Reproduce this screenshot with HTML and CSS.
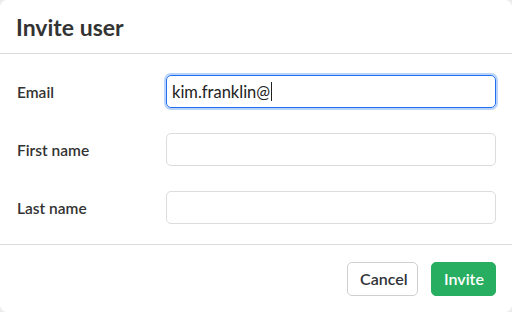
FILE: index.html
```html
<!DOCTYPE html>
<html lang="en">
<head>
    <meta charset="UTF-8">
    <meta name="viewport" content="width=device-width, initial-scale=1.0">
    <title>Invite user</title>
    <link rel="stylesheet" href="styles.css">
</head>
<body>

<div class="dialog">
    <div class="dialog-header">
        <h1>Invite user</h1>
    </div>

    <div class="dialog-body">
        <div class="form-row">
            <label for="email">Email</label>
            <div class="field focused"><span class="value">kim.franklin@</span><span class="caret"></span></div>
        </div>
        <div class="form-row">
            <label for="first-name">First name</label>
            <div class="field"></div>
        </div>
        <div class="form-row">
            <label for="last-name">Last name</label>
            <div class="field"></div>
        </div>
    </div>

    <div class="dialog-footer">
        <button class="btn btn-default">Cancel</button>
        <button class="btn btn-primary">Invite</button>
    </div>
</div>

</body>
</html>
```

FILE: styles.css
```css
html, body {
    margin: 0;
    padding: 0;
    background-color: #ececec;
}
body {
    font-family: Lato, "Noto Sans", sans-serif;
    color: #2f3337;
}
.dialog {
    width: 512px;
    height: 312px;
    background-color: #fff;
    border-radius: 7px;
    display: flex;
    flex-direction: column;
    box-sizing: border-box;
}
.dialog-header {
    height: 53px;
    border-bottom: 1px solid #dcdcdc;
    padding: 0 16px;
    display: flex;
    align-items: center;
}
.dialog-header h1 {
    margin: 0;
    font-size: 23px;
    font-weight: bold;
    color: #333;
}
.dialog-body {
    padding: 21px 16px 20px 17px;
    display: flex;
    flex-direction: column;
    gap: 25px;
    border-bottom: 1px solid #dcdcdc;
}
.form-row {
    display: flex;
    align-items: center;
}
.form-row label {
    width: 149px;
    font-size: 15.5px;
    font-weight: 600;
    color: #333;
}
.field {
    flex: 1;
    height: 33px;
    box-sizing: border-box;
    border: 1px solid #dcdcdc;
    border-radius: 5px;
    display: flex;
    align-items: center;
    padding: 0 5px;
    font-size: 16.5px;
    color: #222;
}
.field.focused {
    border-color: #1f6ff0;
    box-shadow: 0 0 0 2px #b9d3fb;
}
.caret {
    display: inline-block;
    width: 1px;
    height: 19px;
    background-color: #222;
    margin-left: 1px;
}
.dialog-footer {
    flex: 1;
    display: flex;
    justify-content: flex-end;
    align-items: center;
    gap: 13px;
    padding: 0 16px;
}
.btn {
    height: 34px;
    padding: 0 12px;
    font-family: Lato, "Noto Sans", sans-serif;
    font-size: 16px;
    font-weight: 600;
    border-radius: 5px;
    cursor: pointer;
}
.btn-default {
    width: 71px;
    background-color: #fff;
    border: 1px solid #cfcfcf;
    color: #2f3337;
}
.btn-primary {
    width: 65px;
    background-color: #27ae60;
    border: 1px solid #27ae60;
    color: #fff;
}
```
